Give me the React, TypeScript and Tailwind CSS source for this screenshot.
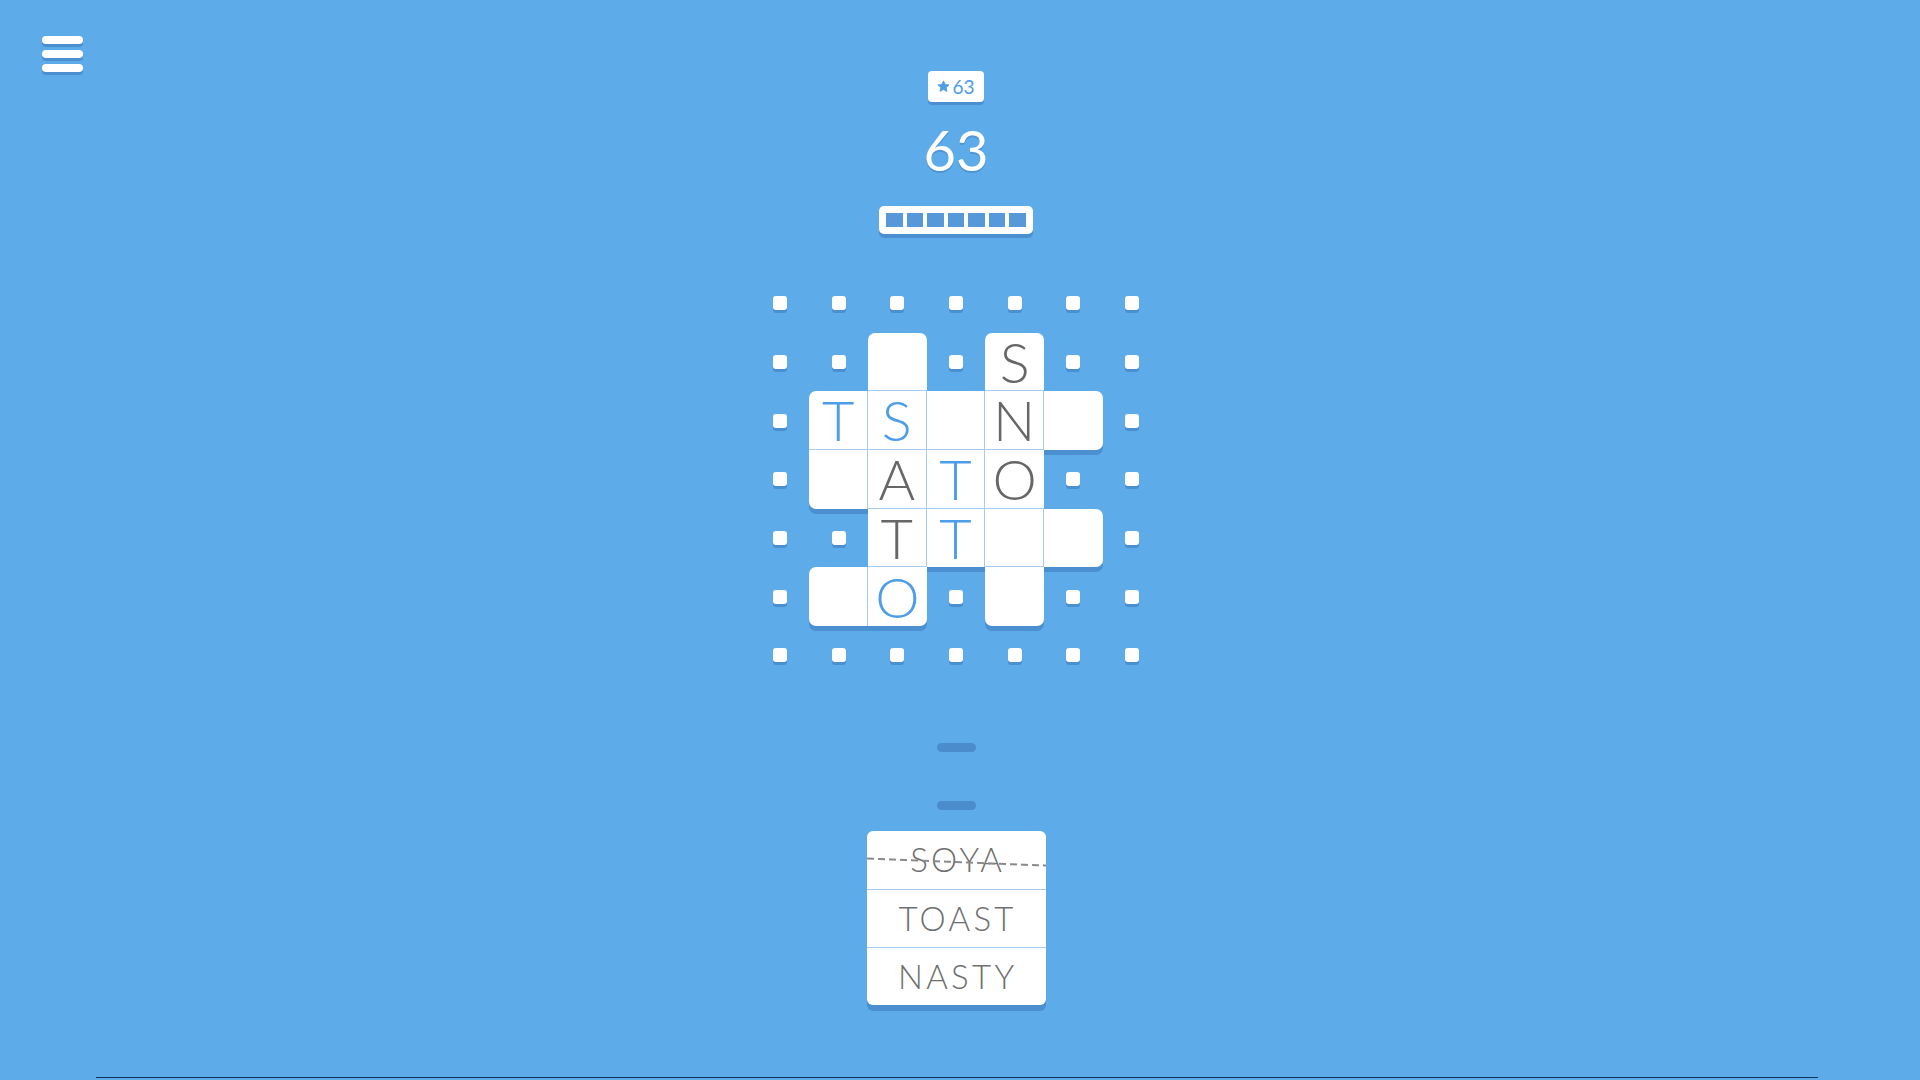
import clsx from 'clsx';

// '.' = empty slot, '#' = blank tile, upper case = placed letter, lower case = hint letter
const board = [
  '.......',
  '..#.S..',
  '.ts#N#.',
  '.#AtO..',
  '..Tt##.',
  '.#o.#..',
  '.......',
];

const words = ['SOYA', 'TOAST', 'NASTY'];

const isTile = (r: number, c: number) =>
  r >= 0 && r < 7 && c >= 0 && c < 7 && board[r][c] !== '.';

function Cell({ r, c }: { r: number; c: number }) {
  const ch = board[r][c];
  if (ch === '.') {
    return (
      <div className="flex items-center justify-center">
        <div className="h-[14px] w-[14px] rounded-[3px] bg-white shadow-[0_3px_0_#4b8fd1]" />
      </div>
    );
  }
  const up = isTile(r - 1, c);
  const down = isTile(r + 1, c);
  const left = isTile(r, c - 1);
  const right = isTile(r, c + 1);
  const letter = ch === '#' ? '' : ch.toUpperCase();
  const hint = ch !== '#' && ch === ch.toLowerCase();
  return (
    <div
      className={clsx(
        'flex items-center justify-center bg-white shadow-[0_5px_0_#4b8fd1] text-[56px] font-light leading-none',
        !up && !left && 'rounded-tl-[7px]',
        !up && !right && 'rounded-tr-[7px]',
        !down && !left && 'rounded-bl-[7px]',
        !down && !right && 'rounded-br-[7px]',
        right && 'border-r border-r-[#a9cbef]',
        down && 'border-b border-b-[#a9cbef]',
        hint ? 'text-[#4d9de8]' : 'text-[#676767]'
      )}
    >
      {letter}
    </div>
  );
}

export default function App() {
  return (
    <div className="flex h-screen w-full flex-col overflow-hidden bg-[#5dace9] font-['Lato','Noto_Sans',sans-serif]">
      <div className="grid grid-cols-[1fr_auto_1fr] pr-[8px]">
        {/* menu */}
        <div>
          <button className="ml-[42px] mt-[36px] flex flex-col gap-[6px]">
            <span className="block h-[8px] w-[41px] rounded-full bg-white shadow-[0_3px_0_#4b8fd1]" />
            <span className="block h-[8px] w-[41px] rounded-full bg-white shadow-[0_3px_0_#4b8fd1]" />
            <span className="block h-[8px] w-[41px] rounded-full bg-white shadow-[0_3px_0_#4b8fd1]" />
          </button>
        </div>

        <div className="flex flex-col items-center">
          {/* level badge */}
          <div className="mt-[71px] flex h-[31px] w-[56px] items-center justify-center gap-[2px] rounded-[4px] bg-white shadow-[0_3px_0_#4b8fd1]">
            <svg width="13" height="13" viewBox="0 0 24 24" className="mb-[1px]">
              <path
                d="M12 1.5l3.1 6.6 7.2.9-5.3 5 1.4 7.1L12 17.6l-6.4 3.5 1.4-7.1-5.3-5 7.2-.9z"
                fill="#4d9de8"
                strokeLinejoin="round"
                stroke="#4d9de8"
                strokeWidth="1.5"
              />
            </svg>
            <span className="text-[19px] leading-none text-[#4d9de8]">63</span>
          </div>

          {/* current level */}
          <div className="mt-[20px] h-[56px] text-[56px] leading-none text-white [text-shadow:0_2px_0_#4f95d6]">
            63
          </div>

          {/* progress */}
          <div className="mt-[28px] flex h-[28px] w-[154px] items-center justify-center gap-[4px] rounded-[5px] bg-white shadow-[0_4px_0_#4b8fd1]">
            {Array.from({ length: 7 }).map((_, i) => (
              <div key={i} className="h-[14px] w-[16.5px] bg-[#5799d8]" />
            ))}
          </div>

          {/* board */}
          <div className="mt-[40px] grid grid-cols-[repeat(7,58.7px)] grid-rows-[repeat(7,58.7px)]">
            {board.map((row, r) =>
              row.split('').map((_, c) => <Cell key={`${r}-${c}`} r={r} c={c} />)
            )}
          </div>

          <div className="mt-[58px] h-[9px] w-[39px] rounded-full bg-[#4a8ccc]" />
          <div className="mt-[49px] h-[9px] w-[39px] rounded-full bg-[#4a8ccc]" />

          {/* word list */}
          <div className="mt-[21px] flex w-[179px] flex-col rounded-[6px] bg-white shadow-[0_6px_0_#4b8fd1]">
            {words.map((w, i) => (
              <div
                key={w}
                className={clsx(
                  'relative flex h-[58px] items-center justify-center text-[33px] font-light leading-none tracking-[0.1em] text-[#6f6f6f]',
                  i > 0 && 'border-t border-t-[#a9cbef]'
                )}
              >
                <span className="pl-[0.1em]">{w}</span>
                {i === 0 && (
                  <div className="absolute left-0 right-0 top-[30px] h-[1.5px] rotate-[2.3deg] bg-[repeating-linear-gradient(90deg,#8a8a8a_0_7px,transparent_7px_11px)]" />
                )}
              </div>
            ))}
          </div>
        </div>
        <div />
      </div>

      <div className="mb-[2px] ml-[96px] mr-[102px] mt-auto h-px bg-[#0f3358]" />
    </div>
  );
}
